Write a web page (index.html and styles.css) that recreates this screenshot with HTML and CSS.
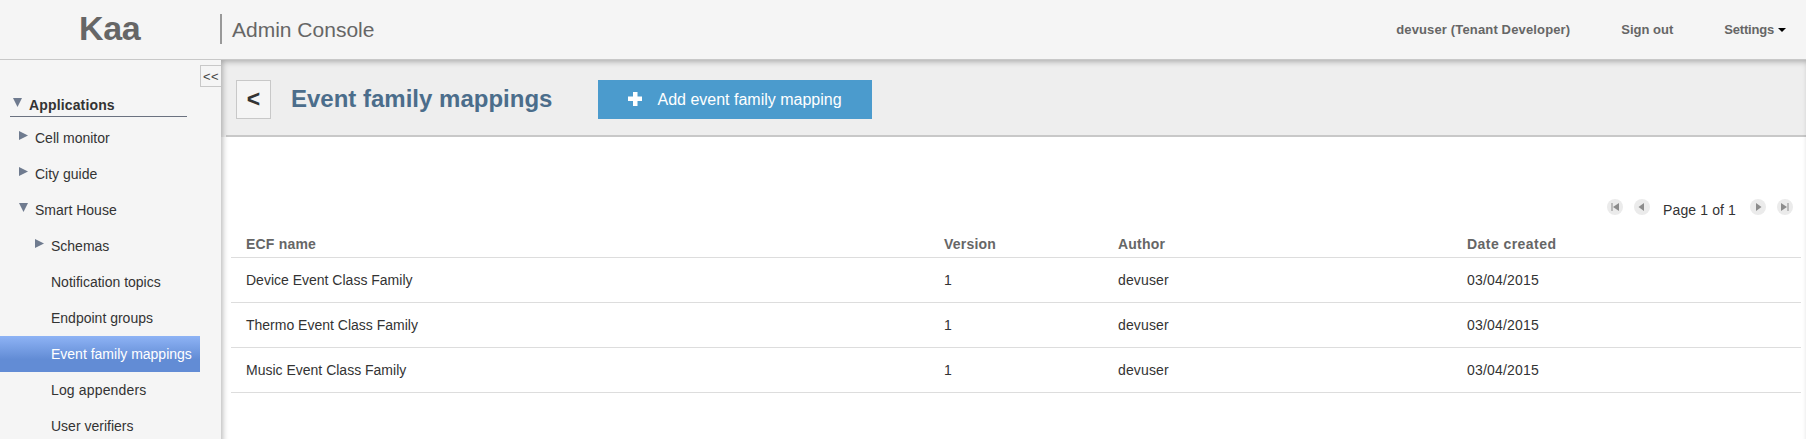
FILE: index.html
```html
<!DOCTYPE html>
<html lang="en">
<head>
<meta charset="utf-8">
<title>Kaa Admin Console</title>
<link rel="stylesheet" href="styles.css">
</head>
<body>
<header class="topbar">
  <div class="logo">Kaa</div>
  <div class="product">Admin Console</div>
  <nav class="account">
    <span class="user">devuser (Tenant Developer)</span>
    <span class="signout">Sign out</span>
    <span class="settings">Settings</span>
    <svg class="caret" width="8" height="4" viewBox="0 0 8 4"><path d="M0 0H8L4 4Z"/></svg>
  </nav>
</header>
<div class="body">
  <aside class="sidebar">
    <div class="collapse">&lt;&lt;</div>
    <div class="group"><svg class="arrow" width="9" height="9" viewBox="0 0 9 9"><path d="M0 0H9L4.5 9Z"/></svg><span>Applications</span></div>
    <ul class="tree">
      <li class="node app"><svg class="arrow" width="9" height="9" viewBox="0 0 9 9"><path d="M0 0L9 4.5L0 9Z"/></svg>Cell monitor</li>
      <li class="node app"><svg class="arrow" width="9" height="9" viewBox="0 0 9 9"><path d="M0 0L9 4.5L0 9Z"/></svg>City guide</li>
      <li class="node app"><svg class="arrow" width="9" height="9" viewBox="0 0 9 9"><path d="M0 0H9L4.5 9Z"/></svg>Smart House</li>
      <li class="node sub"><svg class="arrow" width="9" height="9" viewBox="0 0 9 9"><path d="M0 0L9 4.5L0 9Z"/></svg>Schemas</li>
      <li class="node leaf">Notification topics</li>
      <li class="node leaf">Endpoint groups</li>
      <li class="node leaf selected">Event family mappings</li>
      <li class="node leaf wide">Log appenders</li>
      <li class="node leaf">User verifiers</li>
    </ul>
  </aside>
  <main class="content">
    <div class="titlebar">
      <div class="back">&lt;</div>
      <h1 class="title">Event family mappings</h1>
      <div class="add"><svg class="plus" width="14" height="14" viewBox="0 0 14 14"><path d="M5 0H9.5V4.5H14V9H9.5V14H5V9H0V4.5H5Z"/></svg>Add event family mapping</div>
    </div>
    <div class="pager">
      <svg class="page-btn" width="16" height="16" viewBox="0 0 16 16"><circle cx="8" cy="8" r="8"/><path d="M4.5 4H5.5V12H4.5ZM12 4V12L6 8Z"/></svg>
      <svg class="page-btn" width="16" height="16" viewBox="0 0 16 16"><circle cx="8" cy="8" r="8"/><path d="M10 4V12L4.5 8Z"/></svg>
      <span class="page-text">Page 1 of 1</span>
      <svg class="page-btn" width="16" height="16" viewBox="0 0 16 16"><circle cx="8" cy="8" r="8"/><path d="M6 4V12L11.5 8Z"/></svg>
      <svg class="page-btn" width="16" height="16" viewBox="0 0 16 16"><circle cx="8" cy="8" r="8"/><path d="M11.5 4H10.5V12H11.5ZM4 4V12L10 8Z"/></svg>
    </div>
    <div class="grid">
      <div class="row head"><span>ECF name</span><span>Version</span><span>Author</span><span class="date-head">Date created</span></div>
      <div class="row"><span>Device Event Class Family</span><span>1</span><span class="author">devuser</span><span class="date">03/04/2015</span></div>
      <div class="row"><span>Thermo Event Class Family</span><span>1</span><span class="author">devuser</span><span class="date">03/04/2015</span></div>
      <div class="row"><span>Music Event Class Family</span><span>1</span><span class="author">devuser</span><span class="date">03/04/2015</span></div>
    </div>
  </main>
</div>
</body>
</html>
```
FILE: styles.css
```css
* { box-sizing: border-box; }
body {
  margin: 0;
  height: 439px;
  overflow: hidden;
  display: flex;
  flex-direction: column;
  font: 14px/20px "Liberation Sans", Arial, sans-serif;
  color: #333;
  background: #f5f5f5;
}
span, li, h1, .logo, .product, .add { white-space: nowrap; }

.topbar {
  flex: none;
  height: 60px;
  display: flex;
  border-bottom: 1px solid #c8c8c8;
  color: #666;
}
.logo {
  width: 220px;
  padding: 9px 0 0 79px;
  font-size: 34px;
  line-height: 39px;
  font-weight: bold;
  letter-spacing: -0.3px;
}
.product {
  height: 30px;
  margin-top: 14px;
  padding-left: 10px;
  border-left: 2px solid #999;
  font-size: 21px;
  line-height: 31px;
}
.account {
  flex: 1;
  display: flex;
  justify-content: flex-end;
  padding: 20px 20px 0 0;
  font-size: 13px;
  line-height: 19px;
  font-weight: bold;
}
.user, .signout { margin-right: 51px; }
.user { letter-spacing: 0.15px; }
.settings { margin-right: 4px; letter-spacing: -0.2px; }
.caret { margin-top: 8px; fill: #000; }

.body { flex: 1; display: flex; min-height: 0; }
.sidebar { flex: none; width: 221px; display: flex; flex-direction: column; }
.collapse {
  align-self: flex-end;
  flex: none;
  width: 21px;
  height: 22px;
  margin-top: 5px;
  padding-left: 2px;
  border: 1px solid #c8c8c8;
  border-right: 0;
  font-size: 13px;
  line-height: 22px;
  letter-spacing: 0.3px;
  color: #444;
}
.group {
  flex: none;
  display: flex;
  width: 177px;
  height: 22px;
  margin: 8px 0 3px 10px;
  padding-left: 3px;
  border-bottom: 1px solid #6b7280;
  font-weight: bold;
  letter-spacing: 0.15px;
}
.group .arrow { margin: 3px 7px 0 0; }
.arrow { flex: none; fill: #6f7b8f; }
.tree { list-style: none; margin: 0; padding: 0; }
.node { display: flex; height: 36px; line-height: 36px; width: 200px; }
.node .arrow { margin: 11px 7px 0 0; }
.app { padding-left: 19px; }
.sub { padding-left: 35px; }
.leaf { padding-left: 51px; }
.wide { letter-spacing: 0.15px; }
.selected {
  color: #fff;
  background: linear-gradient(#8eb3f5 0%, #628cd5 65%, #628cd5 100%);
}

.content {
  flex: 1;
  min-width: 0;
  padding-left: 5px;
  background: #fff;
  position: relative;
}
/* Soft inner edge, strongest along the sidebar and the top bar */
.content::after {
  content: "";
  position: absolute;
  inset: 0 -4px -10px 0;
  box-shadow: inset 0 0 6px 1px rgba(0, 0, 0, 0.34);
  pointer-events: none;
}
.titlebar {
  display: flex;
  height: 77px;
  margin-left: -5px;
  padding: 20px 0 0 15px;
  background: linear-gradient(#c8c8c8, #c8c8c8) 5px 75px / 100% 2px no-repeat, #eee;
}
.back {
  width: 35px;
  height: 39px;
  border: 1px solid #c8c8c8;
  background: #f5f5f5;
  text-align: center;
  font-size: 23px;
  line-height: 36px;
  font-weight: bold;
}
.title {
  width: 307px;
  margin: 0 0 0 20px;
  font-size: 24px;
  line-height: 38px;
  color: #4b6d8b;
}
.add {
  display: flex;
  width: 274px;
  height: 39px;
  padding-left: 30px;
  background: #4b9bcd;
  color: #fff;
  font-size: 16px;
  line-height: 39px;
}
.plus { margin: 12px 15.5px 0 0; fill: #fff; }

.pager {
  display: flex;
  justify-content: flex-end;
  height: 36px;
  margin: 62px 13px 0 0;
}
.page-btn { margin-left: 11px; }
.page-btn circle { fill: #ebebeb; }
.page-btn path { fill: #8c8c8c; }
.page-text { margin: 1px 3px 0 13px; letter-spacing: 0.12px; }

.grid { margin: 0 5px; }
.row {
  display: grid;
  grid-template-columns: 698px 174px 349px 1fr;
  height: 45px;
  padding-left: 15px;
  border-bottom: 1px solid #ddd;
  line-height: 44px;
}
.author { letter-spacing: 0.15px; }
.date { letter-spacing: 0.2px; }
.head { height: 23px; line-height: 18px; font-weight: bold; color: #666; letter-spacing: 0.2px; }
.date-head { letter-spacing: 0.45px; }
```
